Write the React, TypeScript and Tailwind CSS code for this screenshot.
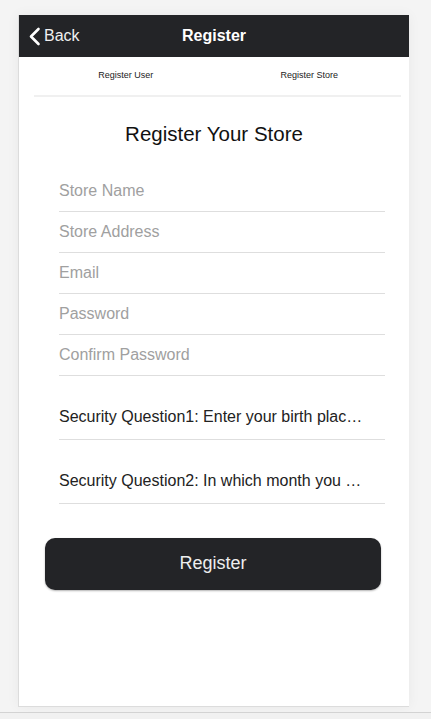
import React from "react";

const fields = ["Store Name", "Store Address", "Email", "Password", "Confirm Password"];

const questions = [
  "Security Question1: Enter your birth plac…",
  "Security Question2: In which month you …",
];

export default function App() {
  return (
    <div className="flex h-[719px] flex-col overflow-hidden bg-[#f4f4f4] font-['Liberation_Sans',Arial,sans-serif]">
      <div className="pl-[18px] pt-[15px]">
        <div className="flex h-[692px] w-[391px] flex-col border-b border-l border-[#dcdcdc] bg-white shadow-[0_0_12px_rgba(0,0,0,0.05)]">
          {/* header */}
          <div className="relative flex h-[42px] items-center bg-[#232427] text-white">
            <div className="flex items-center pl-[9px]">
              <svg width="13" height="19" viewBox="0 0 13 19" className="mr-[3px]">
                <path d="M10.5 2 L3 9.5 L10.5 17" fill="none" stroke="white" strokeWidth="2.6" strokeLinecap="round" strokeLinejoin="round" />
              </svg>
              <span className="text-[16px] text-[#f0f0f0]">Back</span>
            </div>
            <div className="absolute inset-0 flex items-center justify-center text-[16px] font-bold pointer-events-none">
              Register
            </div>
          </div>

          {/* tabs */}
          <div className="ml-[15px] mr-[8px] flex h-[40px] items-center border-b-2 border-[#f0f0f0] text-[9px] text-[#222]">
            <div className="flex-1 text-center">Register User</div>
            <div className="flex-1 text-center">Register Store</div>
          </div>

          <h1 className="mt-[22px] text-center text-[20.5px] text-[#111]">Register Your Store</h1>

          <div className="mt-[21px] ml-[40px] mr-[24px] flex flex-col">
            {fields.map((f) => (
              <div key={f} className="flex h-[41px] items-center border-b border-[#dedede] pt-[1px] text-[16px] text-[#a0a0a0]">
                {f}
              </div>
            ))}
            {questions.map((q) => (
              <div key={q} className="flex h-[64px] items-end border-b border-[#dedede] pb-[10px] text-[16px] whitespace-nowrap text-[#222]">
                {q}
              </div>
            ))}
          </div>

          <button className="mt-[34px] ml-[26px] flex h-[52px] w-[336px] items-center justify-center rounded-[10px] bg-[#232427] text-[18px] text-[#eeeeee] shadow-[0_1px_2px_rgba(0,0,0,0.3)]">
            Register
          </button>
        </div>
      </div>
      <div className="mt-[5px] flex-1 border-t border-[#d3d3d3] bg-[#f1f1f1]" />
    </div>
  );
}
